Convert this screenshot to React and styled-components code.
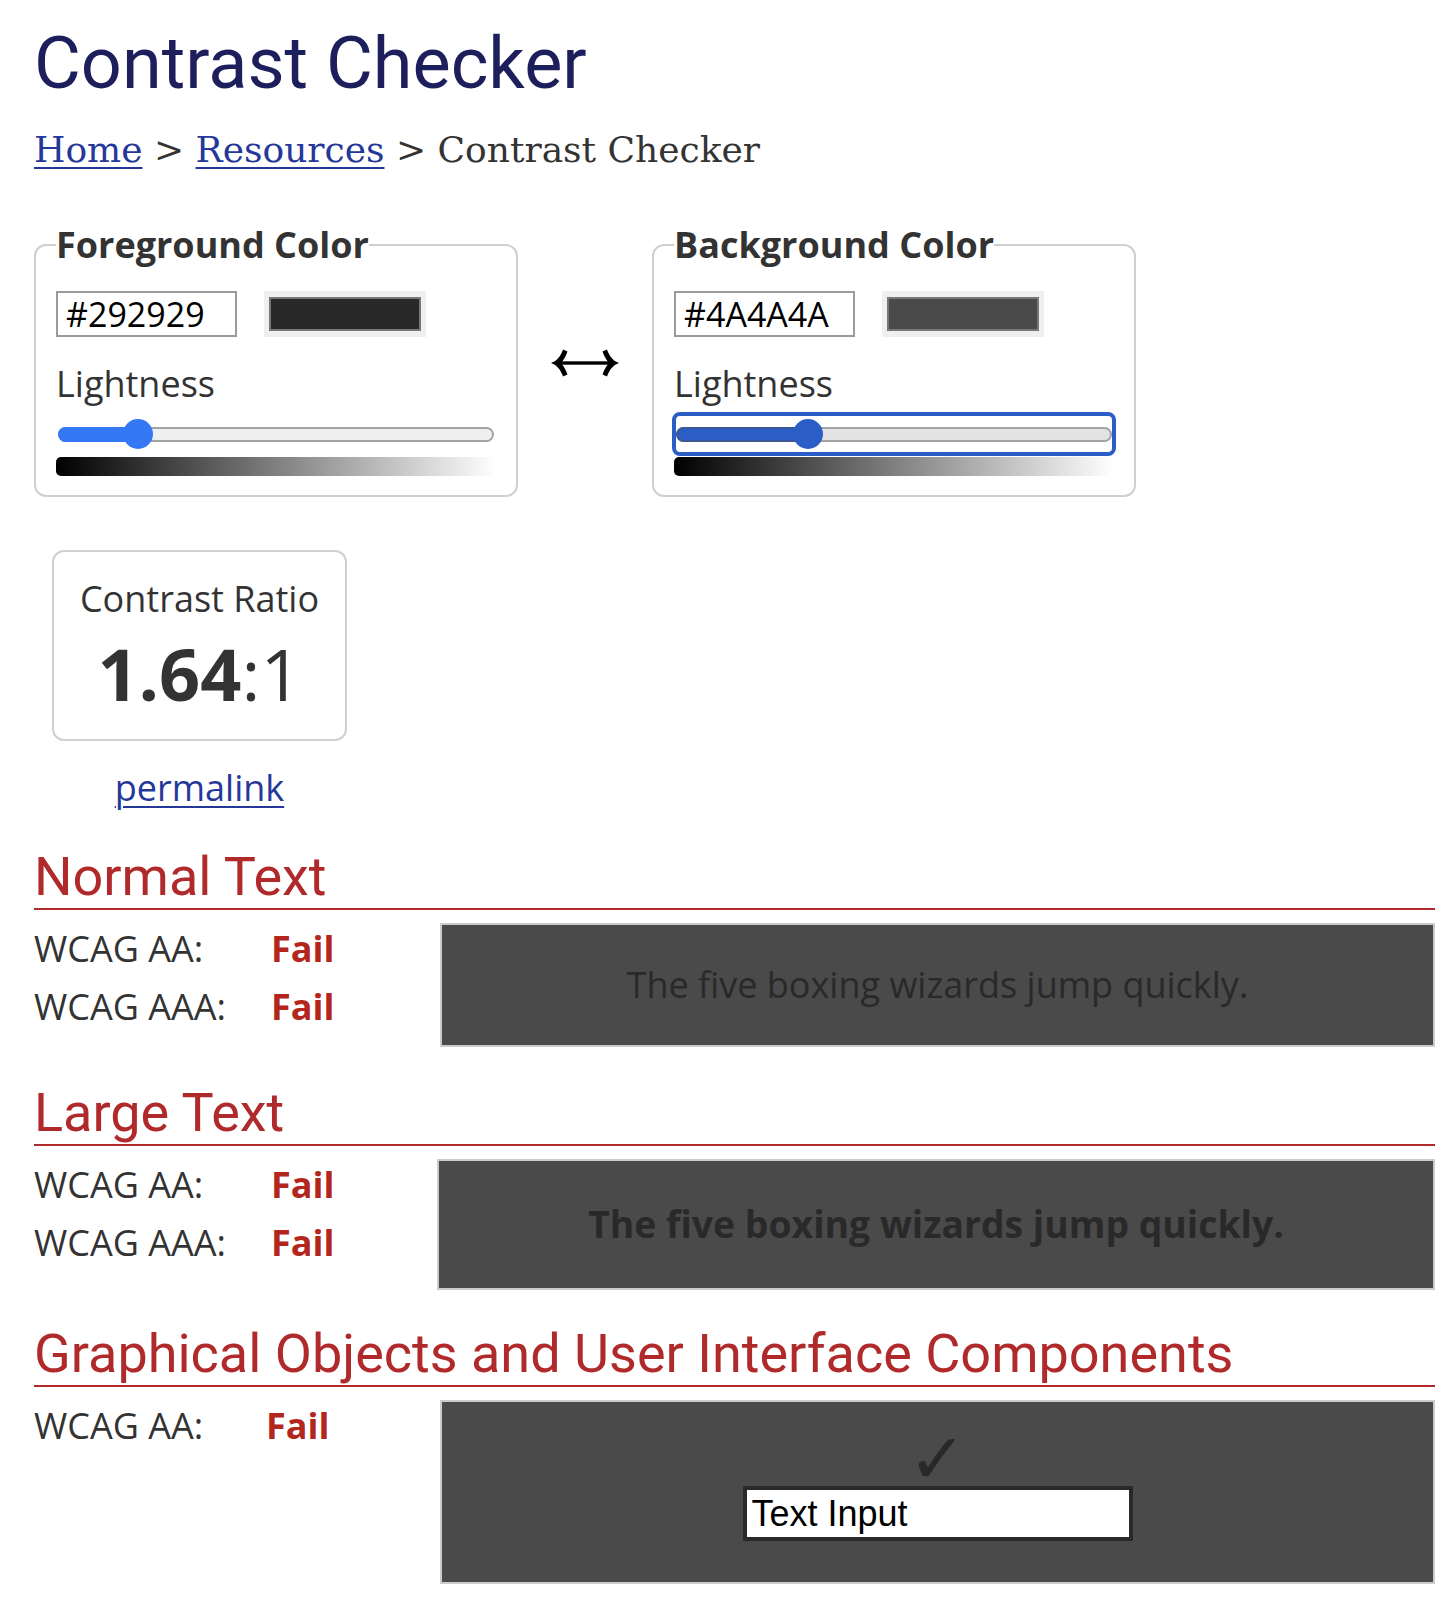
import React from "react";
import styled, { createGlobalStyle } from "styled-components";

const GlobalStyle = createGlobalStyle`
  html, body { margin: 0; padding: 0; background: #fff; }
  body { font-family: "Open Sans", "DejaVu Sans", sans-serif; color: #333; }
  * { box-sizing: border-box; }
`;

const Page = styled.main`
  width: 1456px;
  padding: 22px 21px 16px 34px;
`;

const Title = styled.h1`
  margin: 0;
  font-family: Roboto, "Liberation Sans", sans-serif;
  font-weight: 400;
  font-size: 72px;
  line-height: 84px;
  color: #1d1f5c;
`;

const Breadcrumb = styled.nav`
  margin-top: 22px;
  font-family: "DejaVu Serif", "Liberation Serif", serif;
  font-size: 36px;
  line-height: 43px;
  color: #333;
  white-space: pre;
`;

const Crumb = styled.a`
  color: #25389a;
  text-decoration: underline;
  text-underline-offset: 5px;
  text-decoration-thickness: 2px;
`;

const PickerRow = styled.div`
  display: flex;
  align-items: center;
  margin-top: 53px;
`;

const Fieldset = styled.fieldset`
  width: 484px;
  margin: 0;
  min-width: 0;
  border: 2px solid #cfcfcf;
  border-radius: 12px;
  padding: 0 20px 19px;
`;

const Legend = styled.legend`
  padding: 0;
  font-weight: 700;
  font-size: 36px;
  line-height: 42px;
  color: #333;
`;

const HexRow = styled.div`
  display: flex;
  align-items: center;
  gap: 27px;
  margin-top: 25px;
  height: 46px;
`;

const HexBox = styled.div`
  width: 181px;
  height: 46px;
  border: 2px solid #9a9a9a;
  padding: 0 8px;
  font-size: 34px;
  line-height: 42px;
  color: #000;
`;

const SwatchOuter = styled.div`
  width: 162px;
  height: 46px;
  background: #efefef;
  padding: 6px 5px;
`;

const SwatchInner = styled.div`
  width: 100%;
  height: 100%;
  border: 2px solid #777;
  background: ${(p) => p.$color};
`;

const Label = styled.div`
  margin-top: 22px;
  font-size: 36px;
  line-height: 49px;
  color: #333;
`;

const SliderWrap = styled.div`
  margin: 4px -2px 0;
  height: 44px;
  display: flex;
  align-items: center;
  border: 4px solid ${(p) => (p.$focused ? "#2a5ec6" : "transparent")};
  border-radius: 8px;
`;

const Track = styled.div`
  position: relative;
  flex: 1;
  height: 15px;
  border-radius: 8px;
  border: 2px solid #a3a3a3;
  background: ${(p) => (p.$focused ? "#e3e3e3" : "#efefef")};
`;

const Fill = styled.div`
  position: absolute;
  left: -2px;
  top: -2px;
  bottom: -2px;
  border-radius: 8px 0 0 8px;
  border: 2px solid ${(p) => (p.$focused ? "#3b5895" : "#3578f6")};
  border-right: none;
  background: ${(p) => (p.$focused ? "#2a5dc5" : "#3578f6")};
`;

const Thumb = styled.div`
  position: absolute;
  top: 50%;
  width: 30px;
  height: 30px;
  margin-left: -15px;
  margin-top: -15px;
  border-radius: 50%;
  background: ${(p) => (p.$focused ? "#2a5dc5" : "#3578f6")};
`;

const Gradient = styled.div`
  margin-top: 1px;
  height: 19px;
  border-radius: 5px 0 0 5px;
  background: linear-gradient(to right, #000, #fff);
`;

const ArrowCell = styled.div`
  width: 134px;
  padding-top: 4px;
  display: flex;
  justify-content: center;
  align-items: center;
`;

const RatioBox = styled.div`
  margin: 53px 0 0 18px;
  width: 295px;
  border: 2px solid #cfcfcf;
  border-radius: 12px;
  padding: 22px 0 26px;
  text-align: center;
`;

const RatioLabel = styled.div`
  font-size: 36px;
  line-height: 49px;
  color: #333;
`;

const RatioValue = styled.div`
  margin-top: 10px;
  font-size: 72px;
  line-height: 80px;
  color: #333;
`;

const Strong = styled.span`
  font-weight: 700;
`;

const PermaWrap = styled.div`
  margin: 22px 0 0 18px;
  width: 295px;
  text-align: center;
  font-size: 36px;
  line-height: 49px;
`;

const Link = styled.a`
  color: #25389a;
  text-decoration: underline;
  text-underline-offset: 5px;
  text-decoration-thickness: 2px;
`;

const Section = styled.section`
  margin-top: ${(p) => p.$top}px;
`;

const Heading = styled.h2`
  margin: 0;
  font-family: Roboto, "Liberation Sans", sans-serif;
  font-weight: 400;
  font-size: 54px;
  line-height: 63px;
  color: #b02a2b;
  border-bottom: 2px solid #b02a2b;
`;

const ResultRow = styled.div`
  display: flex;
  align-items: flex-start;
  margin-top: 13px;
`;

const Results = styled.div`
  width: ${(p) => p.$width}px;
  margin-top: -3px;
  flex-shrink: 0;
`;

const ResultLine = styled.div`
  display: grid;
  grid-template-columns: ${(p) => p.$label}px auto;
  font-size: 36px;
  line-height: 58px;
  color: #333;
`;

const Fail = styled.span`
  font-weight: 700;
  color: #b3261e;
`;

const Sample = styled.div`
  flex: 1;
  background: #4a4a4a;
  border: 2px solid #cbcbcb;
  padding: ${(p) => (p.$large ? 37 : 35)}px 20px;
  text-align: center;
  color: #292929;
  font-size: ${(p) => (p.$large ? 37.33 : 36)}px;
  font-weight: ${(p) => (p.$large ? 700 : 400)};
  line-height: 1.4;
`;

const GraphicSample = styled.div`
  flex: 1;
  background: #4a4a4a;
  border: 2px solid #cbcbcb;
  padding: 30px 20px 41px;
  display: flex;
  flex-direction: column;
  align-items: center;
`;

const Check = styled.div`
  font-family: "DejaVu Sans", sans-serif;
  font-size: 70px;
  line-height: 54px;
  color: #292929;
`;

const FakeInput = styled.div`
  width: 390px;
  height: 55px;
  background: #fff;
  border: 4px solid #292929;
  padding: 0 5px;
  font-family: "Liberation Sans", Arial, sans-serif;
  font-size: 36px;
  line-height: 47px;
  color: #000;
  text-align: left;
`;

function SwapArrow() {
  return (
    <svg width="68" height="28" viewBox="0 0 68 28" fill="#000">
      <rect x="6" y="12.3" width="56" height="3.4" />
      <path d="M0 14 C6 12 10 6.5 12 0.5 L16.5 2.5 C14.8 7.5 12.5 11 10 14 C12.5 17 14.8 20.5 16.5 25.5 L12 27.5 C10 21.5 6 16 0 14 Z" />
      <path d="M68 14 C62 12 58 6.5 56 0.5 L51.5 2.5 C53.2 7.5 55.5 11 58 14 C55.5 17 53.2 20.5 51.5 25.5 L56 27.5 C58 21.5 62 16 68 14 Z" />
    </svg>
  );
}

function Picker({ legend, hex, lightness, focused }) {
  const pos = `(15px + (100% - 30px) * ${lightness / 100})`;
  return (
    <Fieldset>
      <Legend>{legend}</Legend>
      <HexRow>
        <HexBox>{hex}</HexBox>
        <SwatchOuter>
          <SwatchInner $color={hex} />
        </SwatchOuter>
      </HexRow>
      <Label>Lightness</Label>
      <SliderWrap $focused={focused}>
        <Track $focused={focused}>
          <Fill $focused={focused} style={{ width: `calc(${pos} + 2px)` }} />
          <Thumb $focused={focused} style={{ left: `calc(${pos} - 2px)` }} />
        </Track>
      </SliderWrap>
      <Gradient />
    </Fieldset>
  );
}

function ResultBlock({ rows, width = 406, label = 237, children }) {
  return (
    <ResultRow>
      <Results $width={width}>
        {rows.map((r) => (
          <ResultLine key={r} $label={label}>
            <span>{r}:</span>
            <Fail>Fail</Fail>
          </ResultLine>
        ))}
      </Results>
      {children}
    </ResultRow>
  );
}

export default function App() {
  return (
    <>
      <GlobalStyle />
      <Page>
        <Title>Contrast Checker</Title>
        <Breadcrumb>
          <Crumb href="#">Home</Crumb>
          {" > "}
          <Crumb href="#">Resources</Crumb>
          {" > "}
          <span>Contrast Checker</span>
        </Breadcrumb>

        <PickerRow>
          <Picker legend="Foreground Color" hex="#292929" lightness={16.1} />
          <ArrowCell>
            <SwapArrow />
          </ArrowCell>
          <Picker legend="Background Color" hex="#4A4A4A" lightness={29} focused />
        </PickerRow>

        <RatioBox>
          <RatioLabel>Contrast Ratio</RatioLabel>
          <RatioValue>
            <Strong>1.64</Strong>:1
          </RatioValue>
        </RatioBox>
        <PermaWrap>
          <Link href="#">permalink</Link>
        </PermaWrap>

        <Section $top={33}>
          <Heading>Normal Text</Heading>
          <ResultBlock rows={["WCAG AA", "WCAG AAA"]}>
            <Sample>The five boxing wizards jump quickly.</Sample>
          </ResultBlock>
        </Section>

        <Section $top={34}>
          <Heading>Large Text</Heading>
          <ResultBlock rows={["WCAG AA", "WCAG AAA"]} width={403}>
            <Sample $large>The five boxing wizards jump quickly.</Sample>
          </ResultBlock>
        </Section>

        <Section $top={32}>
          <Heading>Graphical Objects and User Interface Components</Heading>
          <ResultBlock rows={["WCAG AA"]} label={232}>
            <GraphicSample>
              <Check>✓</Check>
              <FakeInput>Text Input</FakeInput>
            </GraphicSample>
          </ResultBlock>
        </Section>
      </Page>
    </>
  );
}
